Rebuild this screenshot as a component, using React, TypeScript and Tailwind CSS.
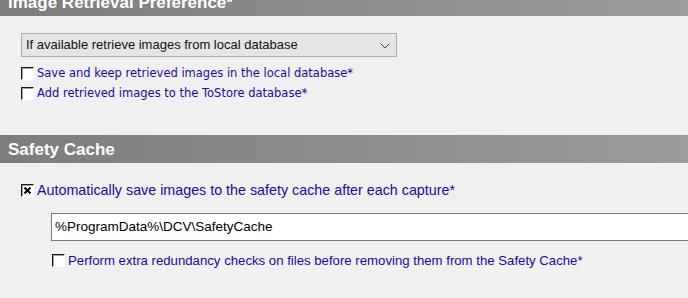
import React from "react";

type CheckProps = { checked?: boolean };

function ClassicCheck({ checked = false }: CheckProps): React.ReactElement {
  return (
    <span className="box-border flex h-[13px] w-[13px] shrink-0 items-center justify-center border-t border-l border-t-[#1a1a1a] border-l-[#1a1a1a] border-r border-b border-r-[#ffffff] border-b-[#ffffff] bg-white shadow-[inset_1px_1px_0_#a0a0a0]">
      {checked && (
        <svg width="9" height="9" viewBox="0 0 9 9">
          <path d="M1.5 1.5 L7.5 7.5 M7.5 1.5 L1.5 7.5" stroke="#000" strokeWidth="2" />
        </svg>
      )}
    </span>
  );
}

function SectionHeader({ title, className = "" }: { title: string; className?: string }) {
  return (
    <div
      className={`h-[28px] bg-linear-to-r from-[#7d7d7d] to-[#9c9c9c] pt-[2px] pl-[8px] text-[17px] leading-[26px] font-bold text-white ${className}`}
      style={{ fontFamily: '"Liberation Sans", Arial, sans-serif' }}
    >
      {title}
    </div>
  );
}

export default function App(): React.ReactElement {
  const blue = "text-[#22089c]";

  return (
    <div className="h-[298px] w-[688px] overflow-hidden bg-[#f0f0f0]">
      {/* Image retrieval */}
      <SectionHeader title="Image Retrieval Preference*" className="-mt-[12px]" />

      <div className="mt-[17px] ml-[21px] flex h-[24px] w-[376px] items-center justify-between border border-[#acacac] bg-[#e5e5e5] pr-[6px] pl-[4px]">
        <span
          className="text-[13px] text-[#111]"
          style={{ fontFamily: '"Liberation Sans", Arial, sans-serif' }}
        >
          If available retrieve images from local database
        </span>
        <svg width="10" height="6" viewBox="0 0 10 6" className="mt-[1px]">
          <path d="M0.5 0.5 L5 5 L9.5 0.5" fill="none" stroke="#444" strokeWidth="1" />
        </svg>
      </div>

      <div
        className={`mt-[10px] ml-[21px] flex flex-col gap-[7px] text-[11.5px] ${blue}`}
        style={{ fontFamily: '"DejaVu Sans", Tahoma, sans-serif' }}
      >
        <div className="flex h-[13px] items-center gap-[3px] whitespace-nowrap">
          <ClassicCheck />
          <span>Save and keep retrieved images in the local database*</span>
        </div>
        <div className="flex h-[13px] items-center gap-[3px] whitespace-nowrap">
          <ClassicCheck />
          <span>Add retrieved images to the ToStore database*</span>
        </div>
      </div>

      {/* Safety cache */}
      <SectionHeader title="Safety Cache" className="mt-[35px]" />

      <div style={{ fontFamily: '"Liberation Sans", Arial, sans-serif' }}>
        <div className={`mt-[21px] ml-[21px] flex h-[13px] items-center gap-[3px] text-[14.3px] whitespace-nowrap ${blue}`}>
          <ClassicCheck checked />
          <span>Automatically save images to the safety cache after each capture*</span>
        </div>

        <div className="mt-[16px] ml-[51px] flex h-[28px] w-[660px] items-center border border-[#7a7a7a] bg-white pl-[3px] text-[13.5px] text-black">
          %ProgramData%\DCV\SafetyCache
        </div>

        <div className={`mt-[13px] ml-[52px] flex h-[13px] items-center gap-[3px] text-[13.2px] whitespace-nowrap ${blue}`}>
          <ClassicCheck />
          <span>Perform extra redundancy checks on files before removing them from the Safety Cache*</span>
        </div>
      </div>
    </div>
  );
}
